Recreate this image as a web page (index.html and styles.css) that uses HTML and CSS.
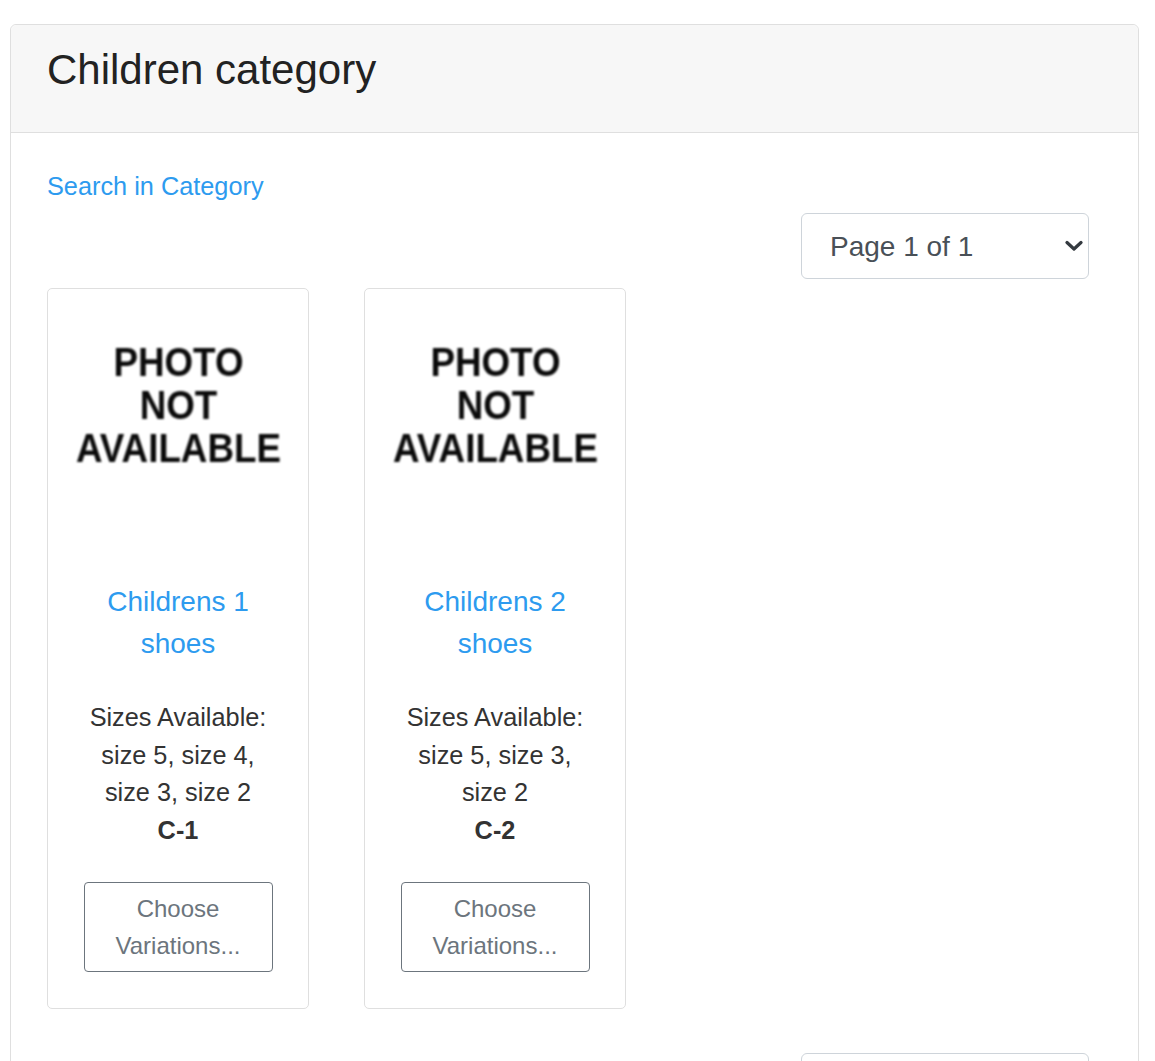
FILE: index.html
```html
<!DOCTYPE html>
<html lang="en">
<head>
<meta charset="utf-8">
<title>Children category</title>
<link rel="stylesheet" href="styles.css">
</head>
<body>
<div class="page">
  <div class="card">
    <div class="card-header">
      <h3 class="title">Children category</h3>
    </div>
    <div class="card-body">
      <div class="search-row"><a class="link" href="#">Search in Category</a></div>
      <div class="pager-row">
        <div class="select-wrap">
          <select class="pager"><option>Page 1 of 1</option></select>
          <svg class="chev" width="18" height="12" viewBox="0 0 18 12"><path d="M2 2.5 L9 9 L16 2.5" fill="none" stroke="#343a40" stroke-width="3.2" stroke-linecap="round" stroke-linejoin="round"/></svg>
        </div>
      </div>
      <div class="products">
        <div class="product">
          <div class="photo"><div class="photo-text">PHOTO<br>NOT<br>AVAILABLE</div></div>
          <a class="pname" href="#">Childrens 1 shoes</a>
          <div class="sizes">Sizes Available: size 5, size 4, size 3, size 2</div>
          <div class="sku">C-1</div>
          <button class="btn">Choose Variations...</button>
        </div>
        <div class="product">
          <div class="photo"><div class="photo-text">PHOTO<br>NOT<br>AVAILABLE</div></div>
          <a class="pname" href="#">Childrens 2 shoes</a>
          <div class="sizes">Sizes Available: size 5, size 3, size 2</div>
          <div class="sku">C-2</div>
          <button class="btn">Choose Variations...</button>
        </div>
      </div>
      <div class="pager-row bottom">
        <div class="select-wrap">
          <select class="pager"><option>Page 1 of 1</option></select>
          <svg class="chev" width="18" height="12" viewBox="0 0 18 12"><path d="M2 2.5 L9 9 L16 2.5" fill="none" stroke="#343a40" stroke-width="3.2" stroke-linecap="round" stroke-linejoin="round"/></svg>
        </div>
      </div>
    </div>
  </div>
</div>
</body>
</html>
```

FILE: styles.css
```css
html, body {
  margin: 0;
  padding: 0;
  background: #fff;
}
body {
  font-family: "Liberation Sans", Arial, sans-serif;
  color: #333;
  font-size: 25.3px;
  line-height: 37.5px;
}
.page {
  padding: 24px 16px 0 10px;
}
.card {
  width: 1127px;
  border: 1px solid #dfdfdf;
  border-radius: 6px;
  background: #fff;
}
.card-header {
  background: #f7f7f7;
  border-bottom: 1px solid #dfdfdf;
  border-radius: 6px 6px 0 0;
  padding: 20px 36px 37px;
}
.title {
  margin: 0;
  font-weight: 400;
  font-size: 42px;
  line-height: 50px;
  color: #222;
}
.card-body {
  padding: 35px 36px 0;
}
.link {
  color: #2d9bef;
  text-decoration: none;
}
.search-row {
  line-height: 37px;
}
.pager-row {
  display: flex;
  justify-content: flex-end;
  padding-right: 13px;
  margin-top: 8px;
}
.select-wrap {
  position: relative;
  width: 288px;
  height: 66px;
}
.pager {
  appearance: none;
  -webkit-appearance: none;
  width: 288px;
  height: 66px;
  box-sizing: border-box;
  border: 1px solid #ced4da;
  border-radius: 6px;
  background: #fff;
  color: #495057;
  font-family: "Liberation Sans", Arial, sans-serif;
  font-size: 28px;
  padding: 0 28px;
}
.chev {
  position: absolute;
  right: 6px;
  top: 27px;
}
.products {
  display: flex;
  gap: 55px;
  margin-top: 9px;
}
.product {
  width: 190px;
  border: 1px solid #dfdfdf;
  border-radius: 5px;
  padding: 16px 35px 36px;
  text-align: center;
  display: flex;
  flex-direction: column;
  align-items: center;
}
.photo {
  width: 100%;
  height: 276px;
  display: flex;
  justify-content: center;
}
.photo-text {
  margin-top: 36px;
  font-weight: 700;
  font-size: 40px;
  line-height: 43px;
  color: #0a0a0a;
  transform: scaleX(0.92);
  filter: blur(0.9px);
  white-space: nowrap;
}
.pname {
  display: block;
  color: #2d9bef;
  text-decoration: none;
  font-size: 28px;
  line-height: 42px;
  width: 190px;
}
.sizes {
  margin-top: 34px;
  width: 190px;
}
.sku {
  font-weight: 700;
}
.btn {
  margin-top: 33px;
  width: 189px;
  box-sizing: border-box;
  padding: 7px 10px;
  background: #fff;
  border: 1px solid #6c757d;
  border-radius: 4px;
  color: #6c757d;
  font-family: "Liberation Sans", Arial, sans-serif;
  font-size: 24px;
  line-height: 37px;
}
.pager-row.bottom {
  margin-top: 44px;
}
```
